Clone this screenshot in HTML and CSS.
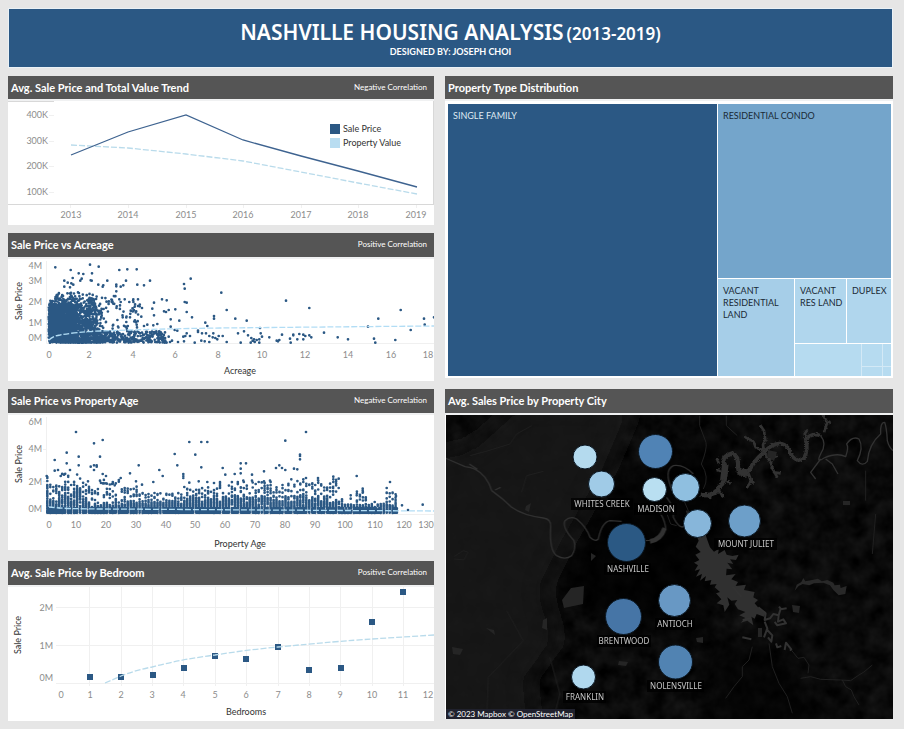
FILE: index.html
```html
<!DOCTYPE html>
<html lang="en">
<head>
<meta charset="utf-8">
<meta name="viewport" content="width=device-width, initial-scale=1">
<title>Nashville Housing Analysis</title>
<link rel="stylesheet" href="styles.css">
</head>
<body>
<header class="banner">
  <h1 class="banner-title"><span>NASHVILLE HOUSING ANALYSIS</span> <span class="banner-years">(2013-2019)</span></h1>
  <p class="banner-byline">DESIGNED BY: JOSEPH CHOI</p>
</header>
<main class="board">
  <div class="column">
    <section class="panel">
      <div class="bar bar-top"><h2>Avg. Sale Price and Total Value Trend</h2><span class="note">Negative Correlation</span></div>
      <svg class="chart" viewBox="8 101 426 124" role="img" aria-label="Average sale price and total value by year">
        <path class="axis" d="M8 101.5H54M8 204.5H434M433.5 101V204"/>
        <path class="grid" d="M49 115.500h5M49 141.500h5M49 166.500h5M49 192.500h5M70.500 205v3M128.500 205v3M186.500 205v3M243.500 205v3M301.500 205v3M358.500 205v3M416.500 205v3"/>
        <g class="tick end"><text x="48" y="118">400K</text><text x="48" y="144">300K</text><text x="48" y="169">200K</text><text x="48" y="195">100K</text></g>
        <g class="tick"><text x="71" y="218">2013</text><text x="128" y="218">2014</text><text x="186" y="218">2015</text><text x="243" y="218">2016</text><text x="301" y="218">2017</text><text x="358" y="218">2018</text><text x="416" y="218">2019</text></g>
        <polyline class="trend" points="71,145 128,148 186,154 243,161 301,172 358,183 417,194"/>
        <polyline class="line" points="71,155 128,132 186,115 243,140 301,156 358,171 417,187"/>
        <rect class="navy" x="330" y="124" width="10" height="10"/><rect class="pale" x="330" y="138" width="10" height="10"/>
        <g class="legend"><text x="343" y="132">Sale Price</text><text x="343" y="146">Property Value</text></g>
      </svg>
    </section>
    <section class="panel">
      <div class="bar"><h2>Sale Price vs Acreage</h2><span class="note">Positive Correlation</span></div>
      <svg class="chart" viewBox="8 259 426 122" role="img" aria-label="Sale price against acreage">
        <path class="grid" d="M46.500 261V343.500H434"/>
        <g class="tick end"><text x="42" y="269">4M</text><text x="42" y="284">3M</text><text x="42" y="305">2M</text><text x="42" y="326">1M</text><text x="42" y="341">0M</text></g>
        <g class="tick"><text x="49" y="358">0</text><text x="89" y="358">2</text><text x="133" y="358">4</text><text x="175" y="358">6</text><text x="218" y="358">8</text><text x="262" y="358">10</text><text x="305" y="358">12</text><text x="348" y="358">14</text><text x="391" y="358">16</text><text x="428" y="358">18</text></g>
        <text class="name" x="240" y="374">Acreage</text>
        <text class="name" transform="translate(22 301) rotate(-90)">Sale Price</text>
        <path class="dots" id="acreage-dots"/>
        <path class="trend bright" d="M49 340Q53 336 60 335Q76 332 100 331Q150 329 220 328Q320 327 434 326"/>
      </svg>
    </section>
    <section class="panel">
      <div class="bar"><h2>Sale Price vs Property Age</h2><span class="note">Negative Correlation</span></div>
      <svg class="chart" viewBox="8 415 426 135" role="img" aria-label="Sale price against property age">
        <path class="grid" d="M46.500 417V514.500H434M43 449.500h4M43 481.500h4"/>
        <g class="tick end"><text x="42" y="425">6M</text><text x="42" y="452">4M</text><text x="42" y="485">2M</text><text x="42" y="512">0M</text></g>
        <g class="tick"><text x="49" y="528">0</text><text x="76" y="528">10</text><text x="106" y="528">20</text><text x="136" y="528">30</text><text x="166" y="528">40</text><text x="195" y="528">50</text><text x="225" y="528">60</text><text x="255" y="528">70</text><text x="285" y="528">80</text><text x="315" y="528">90</text><text x="345" y="528">100</text><text x="375" y="528">110</text><text x="404" y="528">120</text><text x="426" y="528">130</text></g>
        <text class="name" x="240" y="547">Property Age</text>
        <text class="name" transform="translate(22 464) rotate(-90)">Sale Price</text>
        <path class="dots" id="age-dots"/>
        <path class="trend bright" d="M49 507Q65 509 105 509L260 510L434 511"/>
      </svg>
    </section>
    <section class="panel panel-last">
      <div class="bar"><h2>Avg. Sale Price by Bedroom</h2><span class="note">Positive Correlation</span></div>
      <svg class="chart" viewBox="8 587 426 134" role="img" aria-label="Average sale price by number of bedrooms">
        <path class="grid" d="M56 607.500H434M56 645.500H434M56 683.500H434M89.500 587V686M121.500 587V686M152.500 587V686M183.500 587V686M215.500 587V686M246.500 587V686M278.500 587V686M309.500 587V686M340.500 587V686M372.500 587V686M403.500 587V686"/>
        <g class="tick end"><text x="53" y="611">2M</text><text x="53" y="649">1M</text><text x="53" y="681">0M</text></g>
        <g class="tick"><text x="61" y="698">0</text><text x="90" y="698">1</text><text x="121" y="698">2</text><text x="152" y="698">3</text><text x="183" y="698">4</text><text x="215" y="698">5</text><text x="246" y="698">6</text><text x="278" y="698">7</text><text x="309" y="698">8</text><text x="340" y="698">9</text><text x="372" y="698">10</text><text x="403" y="698">11</text><text x="428" y="698">12</text></g>
        <text class="name" x="246" y="715">Bedrooms</text>
        <text class="name" transform="translate(21 635) rotate(-90)">Sale Price</text>
        <path class="navy" d="M87 674h6v6h-6zM118 674h6v6h-6zM150 672h6v6h-6zM181 665h6v6h-6zM212 653h6v6h-6zM243 656h6v6h-6zM275 644h6v6h-6zM306 667h6v6h-6zM338 665h6v6h-6zM369 619h6v6h-6zM400 589h6v6h-6z"/>
        <path class="trend" d="M105 683L121 676Q136 670 152 667Q183 659 215 655Q246 650 278 647Q340 641 372 639L434 635"/>
      </svg>
    </section>
  </div>
  <div class="column column-wide">
    <section class="panel">
      <div class="bar bar-top"><h2>Property Type Distribution</h2></div>
      <div class="treemap">
        <div class="cell single">SINGLE FAMILY</div>
        <div class="rest">
          <div class="cell condo">RESIDENTIAL CONDO</div>
          <div class="lower">
            <div class="cell vacant">VACANT RESIDENTIAL LAND</div>
            <div class="small">
              <div class="pair"><div class="cell light">VACANT RES LAND</div><div class="cell light">DUPLEX</div></div>
              <div class="tiny"><i class="wide"></i><i></i><i></i><i></i><i></i></div>
            </div>
          </div>
        </div>
      </div>
    </section>
    <section class="panel">
      <div class="bar"><h2>Avg. Sales Price by Property City</h2></div>
      <div class="map">
        <svg class="chart" viewBox="445 415 448 304" role="img" aria-label="Average sale price by city around Nashville">
          <defs>
            <filter id="terrain" x="0" y="0" width="100%" height="100%" color-interpolation-filters="sRGB"><feTurbulence type="fractalNoise" baseFrequency=".06" numOctaves="3" seed="8"/><feColorMatrix values=".12 0 0 0 -.02  .12 0 0 0 -.02  .12 0 0 0 -.02  0 0 0 0 1"/></filter>
            <filter id="shore" x="-10%" y="-10%" width="120%" height="120%"><feTurbulence type="fractalNoise" baseFrequency=".25" numOctaves="2" seed="3"/><feDisplacementMap in="SourceGraphic" scale="9" xChannelSelector="R" yChannelSelector="G"/></filter>
            <filter id="soft" filterUnits="userSpaceOnUse" x="345" y="315" width="648" height="504"><feGaussianBlur stdDeviation="12"/></filter>
            <clipPath id="frame"><rect x="446" y="415" width="447" height="304"/></clipPath>
          </defs>
          <rect x="446" y="415" width="447" height="304" fill="#0b0b0b"/>
          <g clip-path="url(#frame)">
            <rect x="446" y="415" width="447" height="304" filter="url(#terrain)"/>
            <g filter="url(#soft)"><path d="M400 460L470 445L520 400H640L610 470L570 540L545 590L560 640L530 680L540 760H400z" fill="#161616" opacity=".85"/><path d="M600 500L720 430L735 520L690 640L560 600z" fill="#000" opacity=".7"/><path d="M700 640L790 650L830 740H720z" fill="#000" opacity=".5"/></g>
            <g class="river" transform="translate(440 384) scale(.3333)">
              <path d="M15 222L75 248Q110 250 135 280Q150 300 155 320Q190 345 215 370Q250 395 310 402Q335 405 332 430Q328 500 350 515Q375 530 395 515Q410 490 402 470Q365 430 375 410Q390 395 410 405Q440 430 450 460Q465 475 475 465Q485 415 510 410L545 412"/>
              <path d="M88 240L112 256M165 318L182 310M615 470Q665 470 677 430Q672 400 655 380M680 340Q704 370 700 400Q720 440 735 425Q750 400 740 380M697 320Q670 260 700 245Q730 240 760 270"/>
              <path class="stream" d="M90 215L145 200L210 180L230 150L275 125M245 325L260 275L310 262M42 518L70 500L84 505L72 528L42 525M140 1010L145 880L250 770L200 680M320 1080L360 930L330 820"/>
              <path d="M630 472Q662 468 674 432" stroke-width="14"/>
            </g>
            <g class="river" transform="translate(664 384) scale(.3333)">
              <g class="wide-water">
                <path stroke-width="13" d="M110 332Q150 340 165 310Q190 290 185 245Q165 220 205 208Q225 215 222 250Q225 280 250 270Q265 235 300 205"/>
                <path stroke-width="20" d="M178 290L184 240M222 262L250 266"/>
                <path stroke-width="11" d="M300 205Q320 180 350 178Q375 185 380 210Q400 240 420 222Q435 195 425 165Q445 145 470 155"/>
                <path stroke-width="8" d="M300 205L297 182L304 168L300 140L288 122M295 200L275 190L268 172L240 158M300 205L320 235L330 265L350 268M316 225L340 215M322 248L340 280M252 265L262 290L248 312M256 280L270 298M428 170L422 150L430 138M165 240L158 222M170 262L158 258M188 290L200 300M160 312L178 340M140 330L138 345M480 145L490 115L475 90M487 120L500 112"/>
              </g>
              <path d="M470 155Q490 180 470 210Q455 240 480 222Q520 205 545 218Q555 190 548 180Q565 155 585 165Q600 190 580 230Q595 250 610 232Q615 180 650 150Q648 115 662 115Q668 130 670 170Q675 190 687 200M470 225L440 265L455 285M485 225L505 240L522 270"/>
              <path class="stream" d="M118 315Q138 280 112 240Q130 195 126 175L107 125V95M187 95V125L220 155M0 365L20 420L38 425M60 350L75 385M605 260V350M635 390L625 510"/>
            </g>
            <g class="river" transform="translate(664 550) scale(.3333)">
              <path fill="#303030" stroke="none" d="M95 -10L104 -28L98 -42L112 -38L122 -55L130 -30L138 -8L150 5L165 -4L162 12L182 0L188 14L205 18L224 14L216 30L198 28L208 42L190 38L205 58L188 56L186 76L215 72L202 88L222 96L215 108L246 104L240 120L272 126L268 142L282 150L272 160L286 176L306 186L300 200L278 192L272 206L262 200L268 226L250 212L230 218L244 204L226 196L244 186L222 178L212 162L220 150L202 152L190 142L196 164L182 186L178 166L158 160L172 148L156 130L168 126L152 112L158 102L138 104L142 90L122 94L126 78L108 92L114 72L96 80L108 58L92 62L102 46L90 38L106 30L94 14L110 6z"/>
              <path stroke-width="6" d="M283 172L305 190L302 210L318 205L328 192L344 196L342 215L358 208L366 220L340 226L332 216M344 196L350 176L345 170M350 178L368 175M302 215L310 235L300 262M310 240L325 256L322 275L312 262M336 280L340 292L352 288M362 300L366 278L382 298L378 302M235 262L262 268M236 210L262 204M206 110L232 140"/>
              <path class="pond" d="M392 122L398 104L412 96L418 84L424 94L444 90L462 86L474 94L490 90L508 98L512 106L528 104L530 114L548 108L544 132L524 136L508 120L498 106L478 98L450 100L436 106L416 102L404 108z"/>
              <path class="stream" d="M382 300L402 325L420 322L435 345L432 370M410 385L440 380L470 388L530 390L560 392L585 375L600 366L625 345M535 390L545 410L562 420L570 440L585 465M265 290L255 330L235 350V380L210 410L185 445M315 280L325 350L345 400L370 440L385 490"/>
            </g>
            <g class="district"><path d="M562 600L571 588L584 586L583 604L564 608zM543 620l4-2v12l-5-2zM452 647l11 2-3 6-7-1zM486 628l8 2 1 5zM619 661l9 1-2 4-8-1zM601 497l7 1-1 6-6-2zM526 506l5-3-2 9-4-2zM654 454l7-7 3 3zM591 553l5 3-5 5z"/><path d="M696 638l7-1v6l-6-1zM792 605l8 1-1 7-6-1zM758 628h4v9h-4zM843 501h7v4h-7zM768 450l9 2-3 9-7-5z"/></g>
            <g class="plate"><rect x="571" y="498" width="62" height="12"/><rect x="634" y="503" width="43" height="12"/><rect x="604" y="563" width="47" height="12"/><rect x="714" y="538" width="63" height="12"/><rect x="655" y="618" width="40" height="12"/><rect x="597" y="635" width="54" height="12"/><rect x="647" y="680" width="57" height="12"/><rect x="563" y="691" width="43" height="12"/></g>
            <g class="city"><circle cx="585" cy="457" r="12" fill="#b4daee"/><circle cx="655.500" cy="451.500" r="17" fill="#5083b5"/><circle cx="601.500" cy="484" r="13" fill="#a0cbe7"/><circle cx="654.500" cy="489.500" r="12" fill="#b9dff1"/><circle cx="626.500" cy="542.500" r="19" fill="#2b5984"/><circle cx="685.500" cy="487.500" r="14" fill="#8fbfe0"/><circle cx="697.500" cy="523.500" r="14" fill="#87b6da"/><circle cx="744.500" cy="521" r="16" fill="#6d9fc9"/><circle cx="623.500" cy="616.500" r="18" fill="#4675a6"/><circle cx="674.500" cy="600.500" r="16" fill="#6898c4"/><circle cx="675.500" cy="662" r="17" fill="#5183b2"/><circle cx="583.500" cy="677" r="12" fill="#b0d8ee"/></g>
            <g class="place"><text x="602" y="507">WHITES CREEK</text><text x="656" y="512">MADISON</text><text x="628" y="572">NASHVILLE</text><text x="746" y="547">MOUNT JULIET</text><text x="675" y="627">ANTIOCH</text><text x="624" y="644">BRENTWOOD</text><text x="676" y="689">NOLENSVILLE</text><text x="585" y="700">FRANKLIN</text></g>
          </g>
        </svg>
        <p class="credit"><a href="#mapbox">© 2023 Mapbox</a> <a href="#osm">© OpenStreetMap</a></p>
      </div>
    </section>
  </div>
</main>
<script src="charts.js"></script>
</body>
</html>
```
FILE: styles.css
```css
* { box-sizing: border-box; }
body {
  margin: 0;
  padding: 8px 11px 8px 8px;
  background: #e6e6e6;
  font-family: Lato, "Noto Sans", sans-serif;
  color: #333;
}
h1, h2, p { margin: 0; }
.banner {
  display: flex;
  flex-direction: column;
  align-items: center;
  justify-content: center;
  min-height: 60px;
  background: #2b5884;
  border: 1px solid #eaf1f6;
  color: #fff;
}
.banner-title {
  display: flex;
  align-items: baseline;
  gap: 3px;
  margin-top: 2px;
  font-family: "Noto Sans", sans-serif;
  font-size: 21px;
  line-height: 24px;
  font-weight: 600;
}
.banner-years { font-size: 17px; }
.banner-byline { font-size: 9px; line-height: 12px; font-weight: 700; }
.board {
  display: grid;
  grid-template-columns: 426fr 448fr;
  gap: 11px;
  align-items: start;
  margin-top: 8px;
}
.column { display: flex; flex-direction: column; gap: 8px; min-width: 0; }
.column-wide { gap: 11px; }
.panel { background: #f0f1f2; }
.panel-last { margin-top: 3px; }
.bar {
  display: flex;
  align-items: center;
  justify-content: space-between;
  height: 24px;
  margin-bottom: 2px;
  padding: 0 7px 0 3px;
  background: #555;
  color: #fff;
}
.bar-top { height: 23px; }
.bar h2 { font-size: 11px; line-height: 16px; font-weight: 700; }
.note { font-size: 8px; line-height: 14px; padding-bottom: 2px; }
.chart { display: block; width: 100%; height: auto; background: #fff; }
.axis, .grid { fill: none; stroke: #d8d8d8; }
.grid { stroke: #f0f0f0; }
.tick { font-size: 9px; fill: #8c8c8c; text-anchor: middle; }
.end { text-anchor: end; }
.name { font-size: 9px; fill: #333; text-anchor: middle; }
.legend { font-size: 9px; fill: #333; }
.line { fill: none; stroke: #3e6390; stroke-width: 1.3; }
.trend { fill: none; stroke: #b9dbeb; stroke-width: 1.3; stroke-dasharray: 6 2; }
.bright { stroke: #b2ddf5; }
.navy { fill: #2b5884; }
.pale { fill: #b9ddf1; }
.dots { fill: none; stroke: #2b5884; stroke-width: 2.7; stroke-linecap: round; }

.treemap {
  display: grid;
  grid-template-columns: 269fr 173fr;
  gap: 1px;
  aspect-ratio: 448 / 277;
  padding: 3px 2px 2px 3px;
  background: #fff;
  font-size: 9px;
  line-height: 12px;
}
.cell { min-width: 0; padding: 6px 5px; color: #1a2a36; }
.single { background: #2b5884; color: #dfe9f2; }
.condo { background: #74a5cb; }
.vacant { background: #a6cee8; }
.light { background: #b0d6ed; }
.rest { display: grid; grid-template-rows: 173fr 97fr; gap: 1px; }
.lower { display: grid; grid-template-columns: 76fr 96fr; gap: 1px; min-width: 0; }
.small { display: grid; grid-template-rows: 64fr 32fr; gap: 1px; min-width: 0; }
.pair { display: grid; grid-template-columns: 51fr 44fr; gap: 1px; min-width: 0; }
.pair .cell { padding-right: 0; }
.tiny { display: grid; grid-template-columns: 66fr 20fr 8fr; grid-template-rows: 22fr 9fr; gap: 1px; background: #d3e9f6; }
.tiny i { background: #b6dbf0; }
.tiny .wide { grid-row: span 2; }

.map { position: relative; }
.river { fill: none; stroke: #323232; stroke-width: 4; stroke-linejoin: round; }
.wide-water { stroke: #303030; filter: url(#shore); }
.pond { fill: #282828; stroke: none; }
.stream { stroke: #202020; stroke-width: 3; }
.district { fill: #252525; }
.plate { fill: #000; opacity: .75; }
.city { stroke: #0b1824; stroke-width: 1; }
.place { font-family: "Noto Sans", sans-serif; font-size: 8px; fill: #c8c8c8; text-anchor: middle; }
.credit {
  position: absolute;
  left: 1px;
  bottom: 0;
  padding: 0 2px;
  background: #20212d;
  color: #fff;
  font-size: 8px;
  line-height: 10px;
}
.credit a { color: inherit; text-decoration: none; }
```
FILE: charts.js
```js
// Deterministic random source, so the clouds look the same on each load.
function source(seed) {
  return function () {
    seed = (seed * 1664525 + 1013904223) % 4294967296;
    return seed / 4294967296;
  };
}

// Points are kept in thirds of a unit; top is the chart's vertical origin.
function draw(id, points, top) {
  document.getElementById(id).setAttribute("d", points.map(function (p) {
    return "M" + (p[0] / 3).toFixed(1) + " " + (p[1] / 3 + top).toFixed(1) + "h.01";
  }).join(""));
}

function pairs(text) {
  return text.trim().split(/\s+/).map(function (p) { return p.split(",").map(Number); });
}

var acreage = pairs("166,118 270,110 296,116 212,126 236,136 250,138 276,136 358,126 382,124 410,124 193,158 218,150 203,164 214,166 245,152 241,158 272,157 275,158 322,158 378,158 450,158 295,170 310,172 308,176 349,170 349,175 349,190 362,176 370,172 412,170 432,172 193,176 210,178 220,170 552,168 554,182 572,152 664,194 486,214 500,217 462,224 554,222 560,224 560,252 526,244 492,250 498,252 506,246 457,242 462,262 426,240 414,234 404,236 374,214 400,214 414,214 358,214 362,222 388,222 392,248 424,266 368,268 390,268 512,274 538,278 576,268 642,264 642,272 616,284 622,294 680,246 706,272 740,278 858,218 928,240 780,300 1104,296 1135,272 1202,246 1272,272 1274,290 1302,268 1232,306 1186,336 1122,332 1126,344 1044,334 1013,328 972,314 934,328 928,322 916,324 910,320 898,318 910,334 892,334 880,322 880,320 870,332 872,344 846,320 838,336 834,340 830,338 808,328 786,326 782,316 778,334 778,344 770,336 762,334 764,342 758,338 752,344 754,330 744,322 732,310 714,316 722,344 680,342 656,324 668,324 640,316 652,334 646,330 638,328 628,324 618,316 606,316 594,308 594,312 628,342 614,340 604,338 584,344 570,324 560,316 556,324 550,326 552,340 534,342 532,308 524,306 512,296 510,342 506,326 516,338 472,288 460,292 442,290 432,294 410,290");
var r = source(11), i, x;
for (i = 0; i < 1500; i++) {
  x = r();
  acreage.push([146 + 85 * x, 344 - (96 + 26 * r()) * Math.pow(r(), 0.8 + x / 2)]);
}
for (i = 0; i < 650; i++) {
  x = r();
  acreage.push([200 + (60 + 55 * r()) * x, 344 - (90 + 30 * r()) * Math.pow(r(), 1.2 + x)]);
}
for (i = 0; i < 130; i++) acreage.push([150 + 140 * r(), 246 - 34 * r()]);
for (i = 0; i < 38; i++) acreage.push([165 + 115 * r(), 216 - 24 * r()]);
for (i = 0; i < 300; i++) { x = Math.pow(r(), 1.5); acreage.push([280 + 220 * x, 344 - 34 * Math.pow(r(), 1 + x / 2)]); }
for (i = 0; i < 110; i++) acreage.push([270 + 150 * Math.pow(r(), 1.6), 314 - 110 * r()]);
draw("acreage-dots", acreage, 228);

var age = pairs("228,144 308,168 282,178 200,206 236,218 300,218 164,228 200,238 236,244 272,248 282,244 290,244 290,248 282,258 164,260 174,258 210,258 416,244 478,258 390,268 488,276 362,282 318,276 308,270 192,272 182,276 140,276 264,292 300,290 308,298 318,298 336,300 344,304 408,292 426,302 460,294 524,210 532,244 568,174 604,174 622,174 586,212 604,250 550,270 550,276 550,282 568,296 596,292 622,294 668,252 676,272 704,270 722,238 738,238 722,254 722,268 730,290 756,272 756,290 792,262 792,292 810,290 828,252 838,244 846,252 856,170 856,258 882,254 892,256 874,286 900,212 900,216 900,226 918,144 918,282 910,294 954,282 954,288 1000,278 1000,286 1000,294 1016,284 1016,312 1070,276 1170,294 1160,312 1160,326 1088,314 1088,320 1088,326 1188,336 1206,364 1224,378 1268,362 1052,334 1052,344 1070,334 1026,346 1124,354");
// Height of the solid band and of the loose dots over it, by age range.
var bands = [[0, 100, 112], [4, 40, 88], [11, 62, 120], [14, 36, 96], [17, 25, 75], [24, 23, 100], [30, 30, 80], [45, 34, 60], [55, 40, 78], [75, 44, 95], [83, 42, 90], [91, 52, 104], [96, 42, 88], [97, 45, 110], [99, 18, 40], [103, 8, 26], [107, 22, 65], [113, 8, 28], [118, 26, 68]];
r = source(29);
for (var year = 0; year <= 117; year++) {
  var band = bands.find(function (b) { return year <= b[0]; });
  var solid = band[1] * (0.75 + 0.5 * r());
  x = 142 + year * 8.93;
  for (i = 0; i < 26; i++) age.push([x, 387 - solid * r()]);
  for (i = 0; i < 7; i++) age.push([x, 387 - band[2] * r()]);
  age.push([x, 386], [x, 380]);
  if (r() > 0.25) age.push([x + 4, 386], [x + 4, 379], [x + 4, 373]);
}
draw("age-dots", age, 384);
```
